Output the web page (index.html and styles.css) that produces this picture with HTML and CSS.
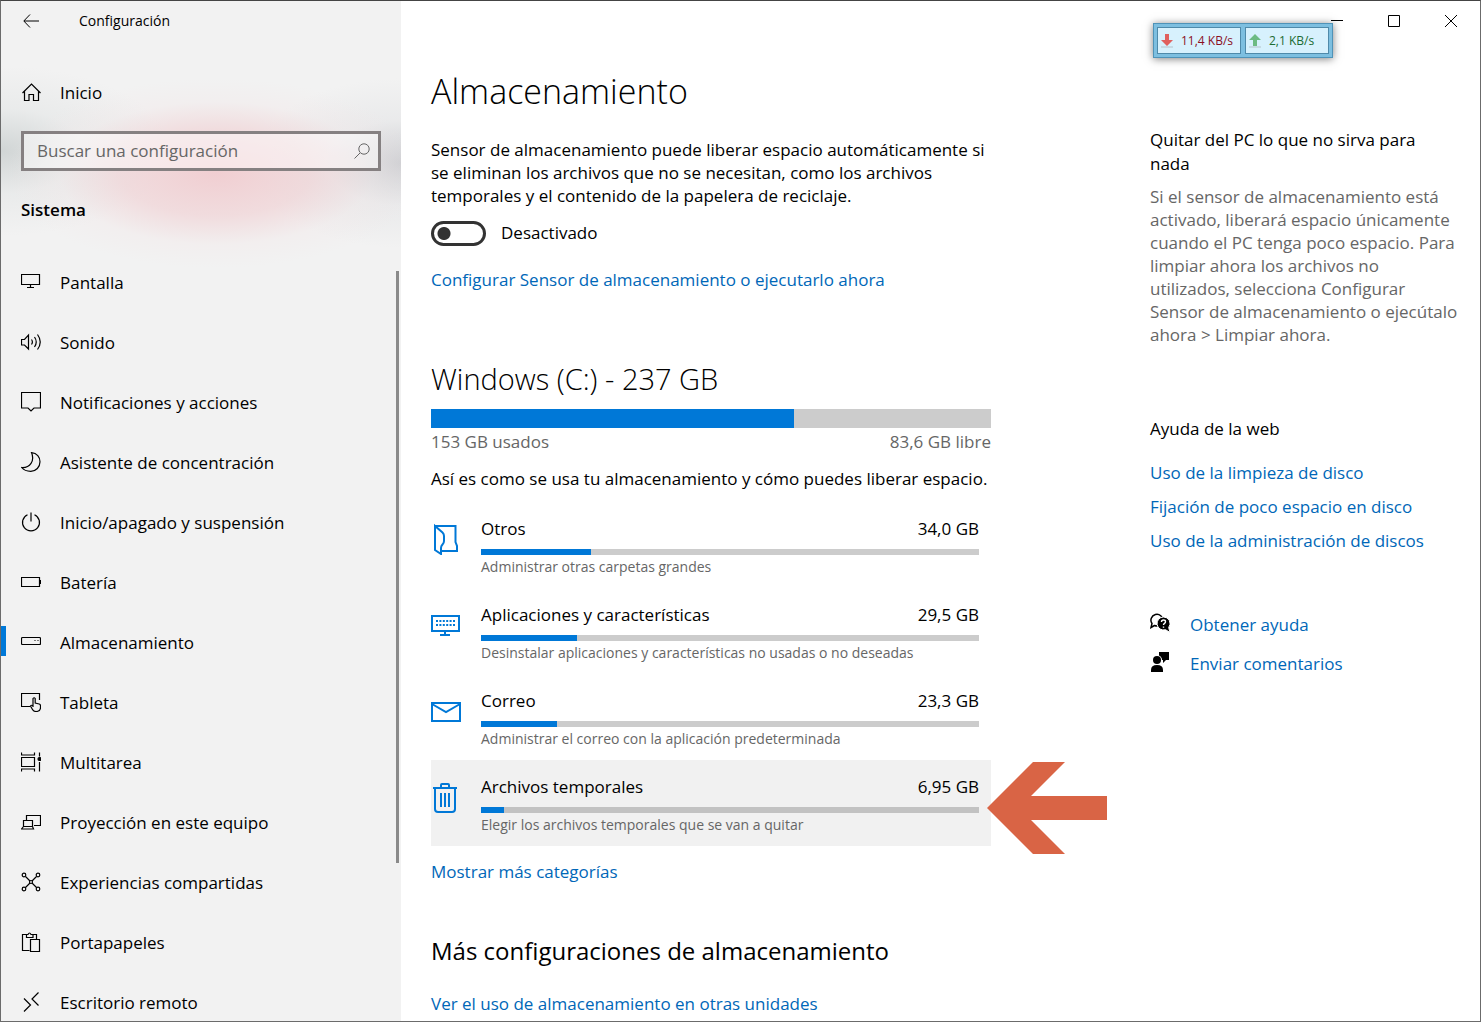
FILE: index.html
```html
<!DOCTYPE html>
<html lang="es">
<head>
  <meta charset="UTF-8">
  <meta name="viewport" content="width=device-width, initial-scale=1.0">
  <title>Configuración</title>
  <link rel="stylesheet" href="styles.css">
</head>
<body>
  <div class="window">
    <nav class="sidebar">
      <div class="sidebar-title">
        <button class="back" aria-label="Atrás">
          <svg width="16" height="14" viewBox="0 0 16 14"><path d="M7 .5L.8 7 7 13.500M1 7h15"/></svg>
        </button>
        <span>Configuración</span>
      </div>

      <a class="nav-item home" href="#">
        <svg class="icon" viewBox="0 0 20 20"><path d="M1.500 11L10.500 2l9 9M3.500 9.500v9h4.500v-6h4.500v6h5v-9"/></svg>
        Inicio
      </a>

      <div class="search">
        <input type="text" id="search" placeholder="Buscar una configuración" aria-label="Buscar una configuración">
        <svg width="16" height="16" viewBox="0 0 16 16"><circle cx="10" cy="6" r="5.200"/><path d="M6 10L.5 15.500"/></svg>
      </div>

      <h2 class="section">Sistema</h2>

      <div class="nav-list">
        <a class="nav-item" href="#">
          <svg class="icon" viewBox="0 0 20 20"><path d="M.5 2.500h18v10H.5zM9.500 12.500v3M6 15.500h7"/></svg>
          Pantalla
        </a>
        <a class="nav-item" href="#">
          <svg class="icon" viewBox="0 0 20 20"><path d="M.5 7.500h3l4-4.500v14l-4-4h-3zM10.500 7.500q1.800 2.500 0 5M13.500 5q3.500 5 0 10M16.500 2.500q5.500 7.500 0 15"/></svg>
          Sonido
        </a>
        <a class="nav-item" href="#">
          <svg class="icon" viewBox="0 0 20 20"><path d="M.5 .5h19v15.500h-6.500l-3 3-3-3H.5z"/></svg>
          Notificaciones y acciones
        </a>
        <a class="nav-item" href="#">
          <svg class="icon" viewBox="0 0 20 20"><path d="M10.500 .6C16 1 19 5 19 9.800C19 15 15 19.300 9.800 19.300C6 19.300 2.500 17.800 .7 15.500C9 16 14 9 10.500 .6z"/></svg>
          Asistente de concentración
        </a>
        <a class="nav-item" href="#">
          <svg class="icon" viewBox="0 0 20 20"><path d="M10 .5v9M6.500 2.700a8.500 8.500 0 1 0 7 0"/></svg>
          Inicio/apagado y suspensión
        </a>
        <a class="nav-item" href="#">
          <svg class="icon" viewBox="0 0 20 20"><path d="M.5 5.500h18v9H.5zM19.500 8v4"/></svg>
          Batería
        </a>
        <a class="nav-item active" href="#">
          <svg class="icon" viewBox="0 0 20 20"><rect x=".5" y="5.500" width="19" height="7" rx="1"/><path d="M13.500 8.500h1M16.500 8.500h1"/></svg>
          Almacenamiento
        </a>
        <a class="nav-item" href="#">
          <svg class="icon" viewBox="0 0 20 20"><path d="M9 14.500H.5v-13h18V8M12 15V6.500q1.200-1.500 2.200 0V11l4 1q1.300.4 1.300 2v1.500q0 4-4.500 4-2.500 0-3.500-2L9.500 14q1-1.500 2.500 0"/></svg>
          Tableta
        </a>
        <a class="nav-item" href="#">
          <svg class="icon" viewBox="0 0 20 20"><path d="M.5 .5v2.500h13V.5M.5 5.500h13v9H.5zM.5 19.500V17h13v2.500M18.500 .5v4M18.500 10v9.500"/><circle class="solid" cx="18.500" cy="7" r="1.500"/></svg>
          Multitarea
        </a>
        <a class="nav-item" href="#">
          <svg class="icon" viewBox="0 0 20 20"><path d="M5.500 8V3.500h14v10H13M2.500 8.500h9v6h-9zM2.500 14.500l-2 2.500h12l-1-2.500"/></svg>
          Proyección en este equipo
        </a>
        <a class="nav-item" href="#">
          <svg class="icon" viewBox="0 0 20 20"><circle cx="3" cy="3" r="1.800"/><circle cx="17" cy="3" r="1.800"/><circle cx="3" cy="17" r="1.800"/><circle cx="17" cy="17" r="1.800"/><circle cx="10" cy="10" r="1.500"/><path d="M4.500 4.500L9 9M15.500 4.500L11 9M4.500 15.500L9 11M15.500 15.500L11 11"/></svg>
          Experiencias compartidas
        </a>
        <a class="nav-item" href="#">
          <svg class="icon" viewBox="0 0 20 20"><path d="M8.500 18.500h-7v-16H5M12 2.500h3.500V7M5.500 5.500v-3H7q1.500-3 3 0h2v3zM9.500 7.500h9v12h-9z"/></svg>
          Portapapeles
        </a>
        <a class="nav-item" href="#">
          <svg class="icon" viewBox="0 0 20 20"><path d="M3 6.500L9.500 13 3 19.500M17.500 .5L11 7l6.500 6.500"/></svg>
          Escritorio remoto
        </a>
      </div>
      <div class="scroll-thumb"></div>
    </nav>

    <div class="content">
      <div class="window-controls">
        <button aria-label="Minimizar"><svg width="12" height="12" viewBox="0 0 12 12"><path d="M0 5.500h12"/></svg></button>
        <button aria-label="Maximizar"><svg width="12" height="12" viewBox="0 0 12 12"><path d="M.5 .5h11v11H.5z"/></svg></button>
        <button aria-label="Cerrar"><svg width="12" height="12" viewBox="0 0 12 12"><path d="M0 0l12 12M12 0L0 12"/></svg></button>
      </div>

      <div class="columns">
        <main>
          <h1>Almacenamiento</h1>
          <p class="intro">Sensor de almacenamiento puede liberar espacio automáticamente si se eliminan los archivos que no se necesitan, como los archivos temporales y el contenido de la papelera de reciclaje.</p>
          <div class="toggle">
            <input type="checkbox" id="sensor">
            <label for="sensor">Desactivado</label>
          </div>
          <a class="link" href="#">Configurar Sensor de almacenamiento o ejecutarlo ahora</a>

          <h2 class="drive">Windows (C:) - 237 GB</h2>
          <div class="bar bar-drive"><div class="fill" style="width: 64.8%"></div></div>
          <div class="drive-labels"><span>153 GB usados</span><span>83,6 GB libre</span></div>
          <p class="usage">Así es como se usa tu almacenamiento y cómo puedes liberar espacio.</p>

          <div class="categories">
            <a class="category" href="#">
              <svg class="cat-icon" viewBox="0 0 30 32"><path d="M4 3h20.500v16l1.500 4v5H11M4 3v24l6 4v-6q0-2 1.500-3.500Q13 20 13 18v-5q0-2-1.500-3.500z"/></svg>
              <div class="cat-body">
                <div class="cat-head"><span>Otros</span><span>34,0 GB</span></div>
                <div class="bar"><div class="fill" style="width: 22.1%"></div></div>
                <div class="cat-note">Administrar otras carpetas grandes</div>
              </div>
            </a>
            <a class="category" href="#">
              <svg class="cat-icon" viewBox="0 0 30 32"><path d="M1 7h27v15H1zM14 22v4M9 26h10"/><path class="dots" d="M5 12h19M5 16h19"/></svg>
              <div class="cat-body">
                <div class="cat-head"><span>Aplicaciones y características</span><span>29,5 GB</span></div>
                <div class="bar"><div class="fill" style="width: 19.3%"></div></div>
                <div class="cat-note">Desinstalar aplicaciones y características no usadas o no deseadas</div>
              </div>
            </a>
            <a class="category" href="#">
              <svg class="cat-icon" viewBox="0 0 30 32"><path d="M1 8h28v18H1zM1 9l14 8 14-8"/></svg>
              <div class="cat-body">
                <div class="cat-head"><span>Correo</span><span>23,3 GB</span></div>
                <div class="bar"><div class="fill" style="width: 15.3%"></div></div>
                <div class="cat-note">Administrar el correo con la aplicación predeterminada</div>
              </div>
            </a>
            <a class="category selected" href="#">
              <svg class="cat-icon" viewBox="0 0 30 32"><path d="M2 7h24M10 7V4q0-1 1-1h6q1 0 1 1v3M4 7v21q0 3 3 3h14q3 0 3-3V7M10 12v14M14 12v14M18 12v14"/></svg>
              <div class="cat-body">
                <div class="cat-head"><span>Archivos temporales</span><span>6,95 GB</span></div>
                <div class="bar"><div class="fill" style="width: 4.6%"></div></div>
                <div class="cat-note">Elegir los archivos temporales que se van a quitar</div>
              </div>
              <svg class="arrow" width="120" height="92" viewBox="0 0 120 92"><path d="M0 46L46 0h32L44 34h76v24H44l34 34H46z"/></svg>
            </a>
          </div>
          <a class="link" href="#">Mostrar más categorías</a>

          <h2 class="more">Más configuraciones de almacenamiento</h2>
          <a class="link" href="#">Ver el uso de almacenamiento en otras unidades</a>
        </main>

        <aside>
          <h3>Quitar del PC lo que no sirva para<br>nada</h3>
          <p>Si el sensor de almacenamiento está<br>activado, liberará espacio únicamente<br>cuando el PC tenga poco espacio. Para<br>limpiar ahora los archivos no<br>utilizados, selecciona Configurar<br>Sensor de almacenamiento o ejecútalo<br>ahora &gt; Limpiar ahora.</p>

          <h3 class="web-help">Ayuda de la web</h3>
          <div class="help-links">
            <a href="#">Uso de la limpieza de disco</a>
            <a href="#">Fijación de poco espacio en disco</a>
            <a href="#">Uso de la administración de discos</a>
          </div>

          <div class="support">
            <a href="#">
              <svg width="20" height="20" viewBox="0 0 20 20"><path class="outline" d="M4.500 12.500L1 14.500l1-4A6 5.800 0 1 1 4.500 12.500z"/><path class="bubble" d="M13.500 4a6.500 6.500 0 1 0 2 12.700L20 19.500l-1.300-5A6.500 6.500 0 0 0 13.500 4z"/><path class="mark" d="M11.500 9q0-2 2-2t2 1.700q0 1-1 1.600-1 .6-1 1.700M13.500 13.500v1.300"/></svg>
              Obtener ayuda
            </a>
            <a href="#">
              <svg width="20" height="20" viewBox="0 0 20 20"><circle cx="7" cy="8" r="4"/><path d="M1 20v-2q0-5 6-5t6 5v2zM9 0h10v8h-3l-3 3V8h-1q0-3-3-4.500z"/></svg>
              Enviar comentarios
            </a>
          </div>
        </aside>
      </div>
    </div>

    <!-- network speed widget floating over the window -->
    <div class="net-widget">
      <div class="net down">
        <svg width="14" height="16" viewBox="0 0 14 16"><path d="M5 1h4v6h4L7 13 1 7h4z"/><path class="base" d="M1 14h12"/></svg>
        11,4 KB/s
      </div>
      <div class="net up">
        <svg width="14" height="16" viewBox="0 0 14 16"><path d="M5 13V7H1l6-6 6 6H9v6z"/><path class="base" d="M1 14h12"/></svg>
        2,1 KB/s
      </div>
    </div>
  </div>
</body>
</html>
```
FILE: styles.css
```css
* {
  box-sizing: border-box;
}

body {
  margin: 0;
  font-family: 'Segoe UI', 'Open Sans', 'Noto Sans', sans-serif;
  font-size: 17px;
  line-height: 24px;
  color: #000;
  background-color: #fff;
}

h1, h2, h3, p {
  margin: 0;
  font-weight: 400;
}

a {
  color: #0067b8;
  text-decoration: none;
}

button {
  border: none;
  background: none;
  padding: 0;
}

svg {
  fill: none;
  stroke: #000;
  flex: none;
}

.window {
  position: relative;
  display: flex;
  height: 100vh;
  border: 1px solid #6b6b6b;
  border-top-color: #444;
  overflow: hidden;
}

/* Sidebar */
.sidebar {
  position: relative;
  flex: 0 0 400px;
  display: flex;
  flex-direction: column;
  background-color: #f2f2f2;
  background-image:
    radial-gradient(ellipse 210px 95px at 215px 172px, rgba(240, 200, 204, 0.85), rgba(240, 208, 211, 0.65) 45%, rgba(242, 230, 231, 0.3) 75%, rgba(242, 242, 242, 0)),
    radial-gradient(ellipse 170px 85px at 0 150px, rgba(205, 210, 210, 0.9), rgba(225, 228, 228, 0.5) 50%, rgba(242, 242, 242, 0)),
    radial-gradient(ellipse 150px 85px at 400px 162px, rgba(200, 202, 206, 0.9), rgba(225, 226, 228, 0.5) 50%, rgba(242, 242, 242, 0));
}

.sidebar-title {
  display: flex;
  align-items: center;
  height: 40px;
  padding-left: 22px;
  gap: 40px;
  font-size: 14px;
}

.back {
  display: flex;
}

.nav-item {
  position: relative;
  display: flex;
  align-items: center;
  flex: none;
  height: 60px;
  padding-left: 20px;
  gap: 19px;
  color: #000;
}

.home {
  margin: 22px 0 8px;
}

.icon {
  width: 20px;
  height: 20px;
  margin-bottom: 2px;
  stroke-width: 1.2;
}

.icon .solid {
  fill: #000;
}

.nav-item.active::before {
  content: "";
  position: absolute;
  left: 0;
  top: 13px;
  width: 5px;
  height: 30px;
  background-color: #0078d7;
}

.search {
  display: flex;
  align-items: center;
  height: 40px;
  margin: 0 20px;
  padding: 0 8px 0 13px;
  border: 3px solid #858081;
  background-color: rgba(255, 255, 255, 0.45);
}

.search input {
  flex: 1;
  min-width: 0;
  border: none;
  padding: 0;
  background: none;
  font: inherit;
  outline: none;
}

.search input::placeholder {
  color: #666;
  opacity: 1;
}

.search svg {
  stroke: #666;
}

.section {
  margin: 25px 20px 29px;
  font-size: 17px;
  line-height: 28px;
  font-weight: 600;
}

.nav-list {
  flex: 1;
  min-height: 0;
  display: flex;
  flex-direction: column;
  overflow: hidden;
}

.scroll-thumb {
  position: absolute;
  right: 2px;
  top: 270px;
  width: 3px;
  height: 58%;
  background-color: #8a8a8a;
}

/* Content */
.content {
  flex: 1;
  min-width: 0;
}

.window-controls {
  display: flex;
  justify-content: flex-end;
  height: 40px;
  padding-right: 1px;
}

.window-controls button {
  display: flex;
  align-items: center;
  justify-content: center;
  width: 57px;
}

.columns {
  display: flex;
  justify-content: space-between;
  padding: 0 10px 0 30px;
}

main {
  flex: 0 1 560px;
}

h1 {
  margin-top: 26px;
  font-size: 34px;
  line-height: 48px;
  font-weight: 300;
}

.intro {
  margin-top: 23px;
  line-height: 23px;
}

.toggle {
  display: flex;
  align-items: center;
  gap: 15px;
  height: 26px;
  margin: 13px 0 22px;
}

.toggle input {
  appearance: none;
  width: 55px;
  height: 25px;
  margin: 0;
  border: 3px solid #333;
  border-radius: 13px;
  background: radial-gradient(circle at 10px 50%, #333 6px, transparent 7px);
}

.link {
  display: block;
}

.drive {
  margin: 67px 0 10px;
  font-size: 29px;
  line-height: 40px;
  font-weight: 300;
}

.bar {
  height: 6px;
  background-color: #ccc;
}

.bar-drive {
  height: 19px;
}

.fill {
  height: 100%;
  background-color: #0078d7;
}

.drive-labels {
  display: flex;
  justify-content: space-between;
  margin-top: 2px;
  color: #666;
}

.usage {
  margin: 13px 0 11px;
}

.categories {
  margin-bottom: 14px;
}

.category {
  position: relative;
  display: flex;
  gap: 20px;
  height: 86px;
  padding: 14px 12px 0 0;
  color: #000;
}

.category.selected {
  background-color: #f1f1f1;
}

.selected .bar {
  background-color: #c2c2c2;
}

.cat-icon {
  width: 30px;
  height: 32px;
  margin-top: 7px;
  stroke: #0078d7;
  stroke-width: 2;
}

.cat-icon .dots {
  stroke-dasharray: 2 1.4;
}

.cat-body {
  flex: 1;
}

.cat-head {
  display: flex;
  justify-content: space-between;
  line-height: 26px;
  margin-bottom: 7px;
}

.cat-note {
  margin-top: 2px;
  font-size: 14px;
  line-height: 20px;
  color: #666;
}

.arrow {
  position: absolute;
  left: calc(100% - 4px);
  top: 2px;
  fill: #d96445;
  stroke: none;
}

.more {
  margin: 49px 0 23px;
  font-size: 24px;
  line-height: 36px;
}

/* Help column */
aside {
  flex: 0 1 320px;
  margin-top: 87px;
}

aside p {
  margin-top: 9px;
  line-height: 23px;
  color: #666;
}

.web-help {
  margin: 71px 0 15px;
}

h3 {
  font-size: 17px;
}

.help-links a {
  display: block;
  line-height: 34px;
}

.support {
  margin-top: 47px;
}

.support a {
  display: flex;
  align-items: center;
  gap: 20px;
  height: 39px;
}

.support svg {
  fill: #000;
  stroke: none;
  margin-bottom: 3px;
}

.support .outline {
  fill: none;
  stroke: #000;
  stroke-width: 1.5;
}

.support .bubble {
  stroke: #fff;
  stroke-width: 1;
}

.support .mark {
  fill: none;
  stroke: #fff;
  stroke-width: 1.4;
}

/* Network widget */
.net-widget {
  position: absolute;
  top: 22px;
  right: 147px;
  display: flex;
  gap: 4px;
  width: 180px;
  height: 35px;
  padding: 3px;
  border: 1px solid #4f93b8;
  background-color: #7dbfe0;
  box-shadow: 0 1px 8px rgba(0, 0, 0, 0.5);
}

.net {
  flex: 1;
  display: flex;
  align-items: center;
  gap: 7px;
  padding-left: 2px;
  border: 1px solid #4f8aaa;
  background-color: #d7f1fd;
  font-size: 12px;
  white-space: nowrap;
}

.net svg {
  stroke: none;
}

.net .base {
  stroke: #b5c3cc;
}

.down {
  color: #8b0f1f;
}

.down svg {
  fill: #e0605e;
}

.up {
  color: #1c6b32;
}

.up svg {
  fill: #6dbb83;
}
```
